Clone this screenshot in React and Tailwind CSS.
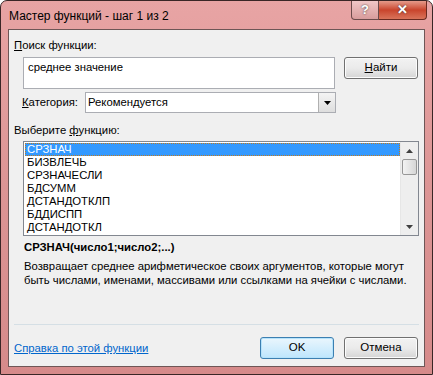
import React from 'react'

const FONT = { fontFamily: '"Liberation Sans", Arial, sans-serif' }

const ITEMS = ['СРЗНАЧ', 'БИЗВЛЕЧЬ', 'СРЗНАЧЕСЛИ', 'БДСУММ', 'ДСТАНДОТКЛП', 'БДДИСПП', 'ДСТАНДОТКЛ']

function Btn({ children, def }) {
  return (
    <div
      className={
        'w-[74px] h-[22px] rounded-[3px] flex items-center justify-center text-[11.5px] text-black ' +
        (def
          ? 'border border-[#3c7fb1] bg-gradient-to-b from-[#eaf6fd] to-[#bee6fd] shadow-[inset_0_0_0_1px_#b6e3fb]'
          : 'border border-[#707070] bg-gradient-to-b from-[#f2f2f2] via-[#ebebeb] to-[#d5d5d5] shadow-[inset_0_0_0_1px_#fcfcfc]')
      }
    >
      {children}
    </div>
  )
}

export default function App() {
  return (
    <div className="w-[433px] h-[375px] bg-white" style={FONT}>
      {/* window frame */}
      <div className="w-[433px] h-[375px] rounded-t-[7px] border border-[#3a2626] bg-gradient-to-b from-[#e8a4a4] via-[#dc9595] to-[#d68a8a] flex flex-col">
        {/* title bar */}
        <div className="h-[28px] flex items-start justify-between pl-[8px] pr-[5px]">
          <span className="mt-[6px] text-[12px] text-black">Мастер функций - шаг 1 из 2</span>
          <div className="flex">
            <div className="w-[28px] h-[19px] rounded-bl-[4px] border border-[#6b4a4a] border-t-0 bg-gradient-to-b from-[#f0c6c6] to-[#d89c9c] flex items-center justify-center text-white text-[13px] font-bold [text-shadow:0_0_2px_#333]">
              ?
            </div>
            <div className="w-[48px] h-[19px] rounded-br-[4px] border border-[#6b2a20] border-t-0 border-l-0 bg-gradient-to-b from-[#e59a8a] via-[#c9442c] to-[#d9735a] flex items-center justify-center text-white text-[13px] font-bold [text-shadow:0_0_2px_#333]">
              ✕
            </div>
          </div>
        </div>

        {/* client area */}
        <div className="mx-[7px] h-[338px] border border-[#6e5656] bg-[#f0f0f0] text-[11.3px] text-black flex flex-col">
          <div className="pl-[5px] pt-[8px] leading-[14px]">
            <span className="underline">П</span>оиск функции:
          </div>

          <div className="mt-[5px] flex items-start">
            <div className="ml-[14px] w-[312px] h-[32px] border border-[#abadb3] bg-white pl-[4px] pt-[2px] leading-[14px]">
              среднее значение
            </div>
            <div className="ml-[9px]">
              <Btn>
                <span><span className="underline">Н</span>айти</span>
              </Btn>
            </div>
          </div>

          <div className="mt-[3px] flex items-center">
            <div className="ml-[13px] w-[63px]">
              <span className="underline">К</span>атегория:
            </div>
            <div className="w-[251px] h-[21px] border border-[#abadb3] bg-white flex items-center justify-between">
              <span className="pl-[2px]">Рекомендуется</span>
              <div className="w-[17px] h-[19px] border-l border-[#b0b0b0] bg-gradient-to-b from-[#f4f4f4] to-[#dedede] flex items-center justify-center">
                <svg width="7" height="4" viewBox="0 0 7 4"><path d="M0 0h7L3.5 4z" fill="#000" /></svg>
              </div>
            </div>
          </div>

          <div className="pl-[5px] mt-[10px] leading-[14px]">
            Выберите <span className="underline">ф</span>ункцию:
          </div>

          <div className="ml-[14px] mt-[4px] w-[396px] h-[95px] border border-[#828790] bg-white flex">
            <div className="flex-1 pt-[1px] pl-[1px]">
              {ITEMS.map((t, i) => (
                <div
                  key={t}
                  className={
                    'h-[13px] leading-[13px] pl-[2px] ' +
                    (i === 0 ? 'bg-[#3399ff] text-white outline-1 outline-dotted outline-[#c07b20] -outline-offset-1' : '')
                  }
                >
                  {t}
                </div>
              ))}
            </div>
            <div className="w-[18px] h-full bg-[#eeeeee] border-l border-[#e6e6e6] flex flex-col items-center">
              <div className="h-[17px] flex items-center justify-center">
                <svg width="7" height="4" viewBox="0 0 7 4"><path d="M0 4h7L3.5 0z" fill="#404040" /></svg>
              </div>
              <div className="w-[15px] h-[16px] rounded-[2px] border border-[#979797] bg-gradient-to-r from-[#f3f3f3] to-[#d6d6d6]" />
              <div className="flex-1" />
              <div className="h-[17px] flex items-center justify-center">
                <svg width="7" height="4" viewBox="0 0 7 4"><path d="M0 0h7L3.5 4z" fill="#404040" /></svg>
              </div>
            </div>
          </div>

          <div className="ml-[15px] mt-[4px] font-bold leading-[14px]">СРЗНАЧ(число1;число2;...)</div>
          <div className="ml-[15px] mt-[5px] leading-[14px]">
            Возвращает среднее арифметическое своих аргументов, которые могут
            <br />
            быть числами, именами, массивами или ссылками на ячейки с числами.
          </div>

          <div className="flex-1" />
          <div className="mx-[5px] h-px bg-[#d5dfe5]" />

          <div className="h-[41px] flex items-start pt-[12px] pl-[5px] pr-[6px]">
            <span className="mt-[3px] text-[#0066cc] underline">Справка по этой функции</span>
            <div className="flex-1" />
            <Btn def>OK</Btn>
            <div className="w-[10px]" />
            <Btn>Отмена</Btn>
          </div>
        </div>
      </div>
    </div>
  )
}
